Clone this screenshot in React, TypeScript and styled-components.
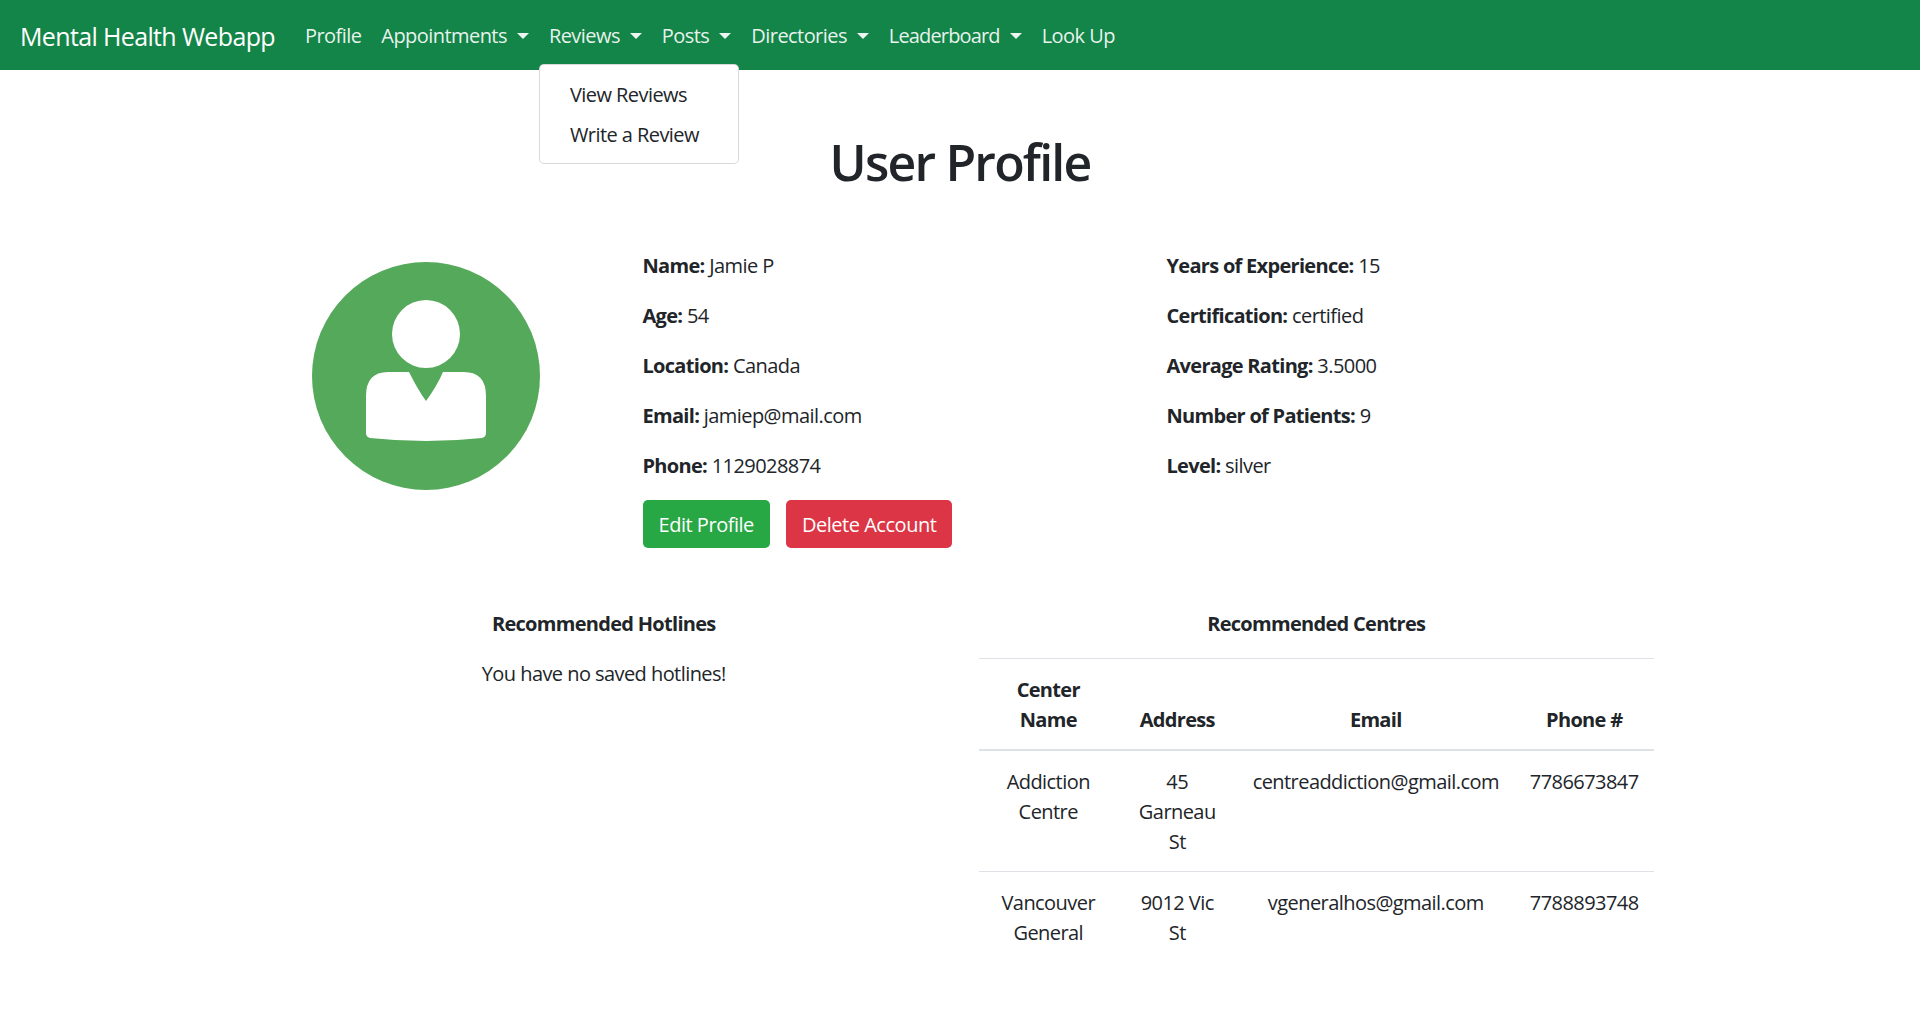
import styled, { createGlobalStyle } from 'styled-components';

const GlobalStyle = createGlobalStyle`
  html, body {
    margin: 0;
    padding: 0;
    background: #fff;
  }
  body {
    font-family: "Open Sans", "Noto Sans", "Liberation Sans", sans-serif;
    font-size: 20px;
    line-height: 30px;
    letter-spacing: -0.56px;
    color: #212529;
  }
  b {
    letter-spacing: -0.7px;
  }
`;

const NavBar = styled.nav`
  display: flex;
  align-items: center;
  height: 70px;
  padding: 2px 20px 0;
  background: #148548;
  box-sizing: border-box;
`;

const Brand = styled.div`
  font-size: 25px;
  line-height: 37px;
  letter-spacing: -0.64px;
  color: #fff;
  margin-right: 20px;
`;

const NavList = styled.div`
  display: flex;
  align-items: center;
`;

const NavItem = styled.div`
  position: relative;
`;

const NavLink = styled.div<{ $caret?: boolean; $spacing?: number }>`
  display: flex;
  align-items: center;
  padding: 10px;
  color: rgba(255, 255, 255, 0.92);
  ${(p) => p.$spacing && `letter-spacing: ${p.$spacing}px;`}
  ${(p) =>
    p.$caret &&
    `
    &::after {
      content: "";
      margin-left: 10px;
      border-top: 6px solid rgba(255, 255, 255, 0.92);
      border-left: 6px solid transparent;
      border-right: 6px solid transparent;
    }
  `}
`;

const DropMenu = styled.div`
  position: absolute;
  top: 53px;
  left: 0;
  width: 200px;
  padding: 10px 0 8px;
  box-sizing: border-box;
  background: #fff;
  border: 1px solid rgba(0, 0, 0, 0.15);
  border-radius: 5px;
`;

const DropItem = styled.div`
  padding: 5px 30px;
  color: #212529;
  white-space: nowrap;
`;

const Container = styled.main`
  width: 1425px;
  margin: 0 auto;
`;

const Title = styled.h1`
  margin: 62px 0 59px;
  font-size: 50px;
  line-height: 60px;
  font-weight: 600;
  letter-spacing: -1.8px;
  text-align: center;
`;

const ProfileRow = styled.section`
  display: grid;
  grid-template-columns: 395px 524px 1fr;
`;

const AvatarCol = styled.div`
  padding: 11px 0 0 64px;
`;

const DetailCol = styled.div``;

const Detail = styled.p`
  margin: 0 0 20px;
`;

const Actions = styled.div`
  display: flex;
  gap: 16px;
  margin-top: -1px;
`;

const Button = styled.button<{ $danger?: boolean }>`
  height: 48px;
  padding: 2px 16px 0;
  border: 0;
  border-radius: 5px;
  font: inherit;
  letter-spacing: -0.47px;
  color: #fff;
  background: ${(p) => (p.$danger ? '#dc3545' : '#28a745')};
`;

const LowerRow = styled.section`
  display: grid;
  grid-template-columns: 1fr 1fr;
  margin-top: 61px;
`;

const Column = styled.div`
  padding: 0 18.75px;
  text-align: center;
`;

const SectionTitle = styled.div`
  font-weight: 700;
  letter-spacing: -0.7px;
  margin-bottom: 20px;
`;

const EmptyNote = styled.p`
  margin: 0;
`;

const Table = styled.table`
  width: 675px;
  table-layout: fixed;
  border-collapse: collapse;
  margin-top: -1px;
`;

const Th = styled.th<{ $width: number }>`
  width: ${(p) => p.$width}px;
  padding: 16px 14px 14px;
  font-weight: 700;
  letter-spacing: -0.7px;
  vertical-align: bottom;
  box-sizing: border-box;
  border-top: 1px solid #dee2e6;
  border-bottom: 2px solid #dee2e6;
`;

const Td = styled.td`
  padding: 16px 14px 14px;
  vertical-align: top;
  border-top: 1px solid #dee2e6;
`;

const Avatar = () => (
  <svg width="228" height="228" viewBox="0 0 228 228">
    <circle cx="114" cy="114" r="114" fill="#55a95a" />
    <circle cx="114" cy="72" r="34" fill="#fff" />
    <path
      d="M97 110 H76 Q54 110 54 134 V171 Q54 175 58 176 Q114 182 170 176 Q174 175 174 171 V134 Q174 110 152 110 H131 Q125 124 114 139 Q106 128 97 110 Z"
      fill="#fff"
    />
  </svg>
);

const App = () => {
  return (
    <>
      <GlobalStyle />
      <NavBar>
        <Brand>Mental Health Webapp</Brand>
        <NavList>
          <NavItem>
            <NavLink>Profile</NavLink>
          </NavItem>
          <NavItem>
            <NavLink $caret>Appointments</NavLink>
          </NavItem>
          <NavItem>
            <NavLink $caret>Reviews</NavLink>
            <DropMenu>
              <DropItem>View Reviews</DropItem>
              <DropItem>Write a Review</DropItem>
            </DropMenu>
          </NavItem>
          <NavItem>
            <NavLink $caret>Posts</NavLink>
          </NavItem>
          <NavItem>
            <NavLink $caret>Directories</NavLink>
          </NavItem>
          <NavItem>
            <NavLink $caret $spacing={-0.85}>Leaderboard</NavLink>
          </NavItem>
          <NavItem>
            <NavLink>Look Up</NavLink>
          </NavItem>
        </NavList>
      </NavBar>
      <Container>
        <Title>User Profile</Title>
        <ProfileRow>
          <AvatarCol>
            <Avatar />
          </AvatarCol>
          <DetailCol>
            <Detail><b>Name:</b> Jamie P</Detail>
            <Detail><b>Age:</b> 54</Detail>
            <Detail><b>Location:</b> Canada</Detail>
            <Detail><b>Email:</b> jamiep@mail.com</Detail>
            <Detail><b>Phone:</b> 1129028874</Detail>
            <Actions>
              <Button>Edit Profile</Button>
              <Button $danger>Delete Account</Button>
            </Actions>
          </DetailCol>
          <DetailCol>
            <Detail><b>Years of Experience:</b> 15</Detail>
            <Detail><b>Certification:</b> certified</Detail>
            <Detail><b>Average Rating:</b> 3.5000</Detail>
            <Detail><b>Number of Patients:</b> 9</Detail>
            <Detail><b>Level:</b> silver</Detail>
          </DetailCol>
        </ProfileRow>
        <LowerRow>
          <Column>
            <SectionTitle>Recommended Hotlines</SectionTitle>
            <EmptyNote>You have no saved hotlines!</EmptyNote>
          </Column>
          <Column>
            <SectionTitle>Recommended Centres</SectionTitle>
            <Table>
              <thead>
                <tr>
                  <Th $width={139}>Center Name</Th>
                  <Th $width={119}>Address</Th>
                  <Th $width={278}>Email</Th>
                  <Th $width={139}>Phone #</Th>
                </tr>
              </thead>
              <tbody>
                <tr>
                  <Td>Addiction Centre</Td>
                  <Td>45 Garneau St</Td>
                  <Td>centreaddiction@gmail.com</Td>
                  <Td>7786673847</Td>
                </tr>
                <tr>
                  <Td>Vancouver General</Td>
                  <Td>9012 Vic St</Td>
                  <Td>vgeneralhos@gmail.com</Td>
                  <Td>7788893748</Td>
                </tr>
              </tbody>
            </Table>
          </Column>
        </LowerRow>
      </Container>
    </>
  );
};

export default App;
